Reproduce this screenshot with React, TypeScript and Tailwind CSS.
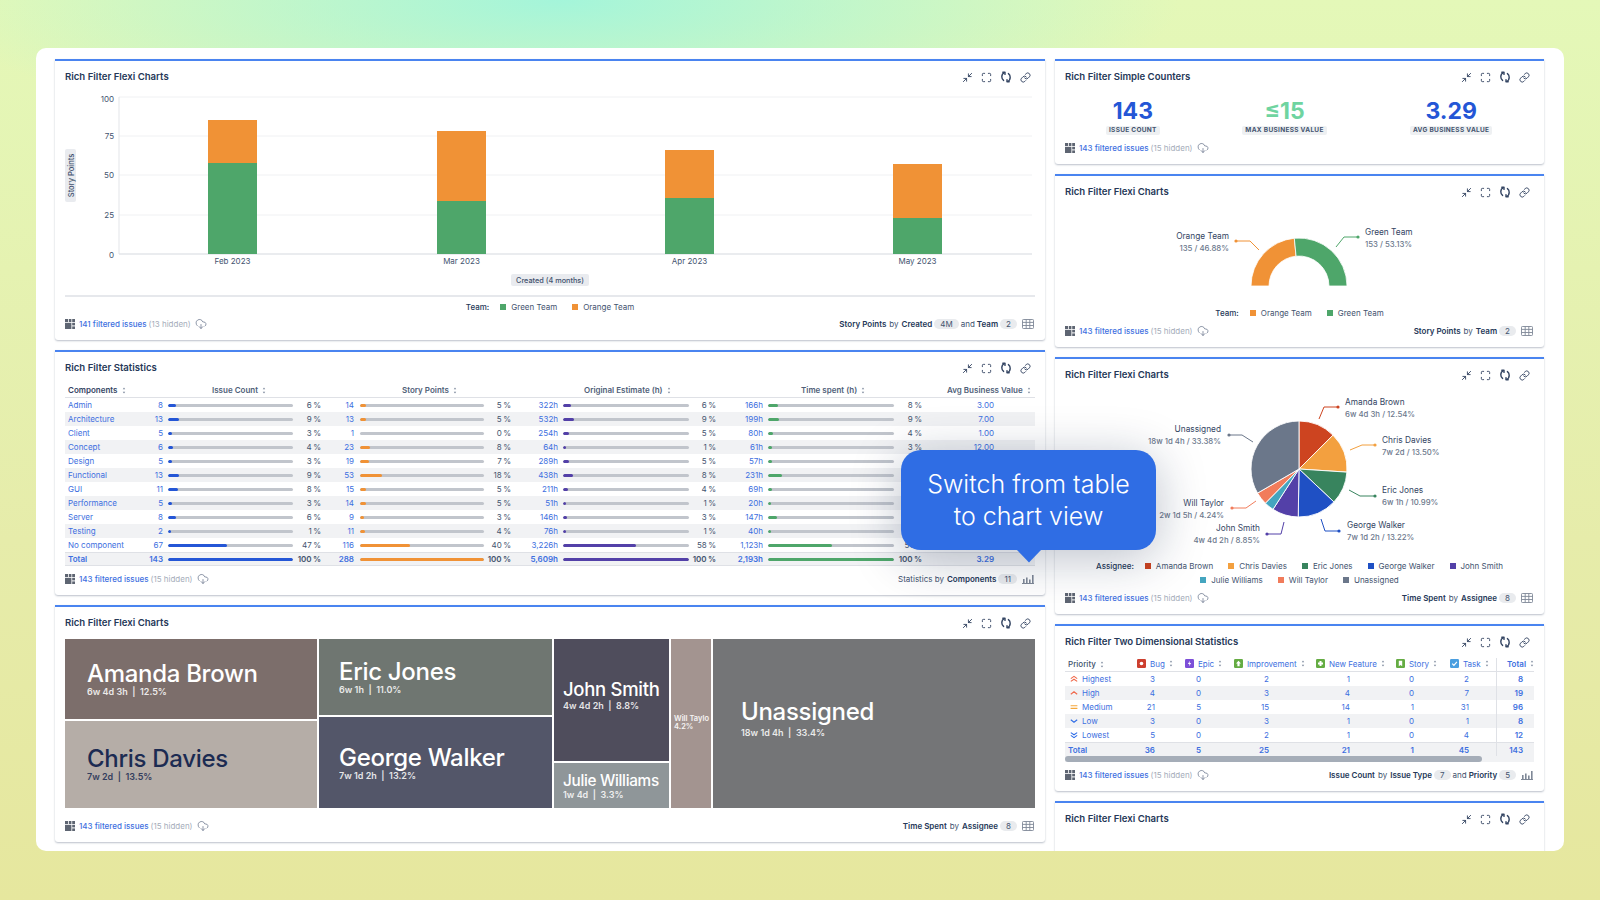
import React from "react";
import { Minimize2, Maximize, Link, CloudDownload } from "lucide-react";

const BLUE = "#2456d6", ORANGE = "#f09236", PURPLE = "#5340a8", GREEN = "#4ea66a";

function Refresh() {
  return (
    <svg width="12" height="12" viewBox="0 0 12 12" fill="none" stroke="#344563" strokeWidth="1.4" strokeLinecap="round" strokeLinejoin="round">
      <path d="M4.5 1.6C2.8 2.2 1.8 3.9 1.8 5.8c0 1.5.7 2.8 1.8 3.6" />
      <path d="M2.8 1.2h2.2v2.2" />
      <path d="M7.5 10.4c1.7-.6 2.7-2.3 2.7-4.2 0-1.5-.7-2.8-1.8-3.6" />
      <path d="M9.2 10.8H7V8.6" />
    </svg>
  );
}

function HeaderIcons() {
  return (
    <div className="flex items-center gap-[8px] text-[#344563]">
      <Minimize2 size={11} strokeWidth={2} />
      <Maximize size={11} strokeWidth={2} />
      <Refresh />
      <Link size={11} strokeWidth={2} />
    </div>
  );
}

function FilterIcon() {
  return (
    <svg width="10" height="10" viewBox="0 0 10 10" fill="#5e6572">
      <rect x="0" y="0" width="3" height="3" />
      <rect x="3.8" y="0" width="2.6" height="3" />
      <rect x="7.2" y="0" width="2.8" height="3" />
      <rect x="0" y="3.8" width="6.4" height="6.2" />
      <rect x="7.2" y="3.8" width="2.8" height="2.6" />
      <rect x="7.2" y="7.4" width="2.8" height="2.6" />
    </svg>
  );
}

function TableIcon() {
  return (
    <svg width="12" height="10" viewBox="0 0 12 10" fill="none" stroke="#7f8897" strokeWidth="0.9">
      <rect x="0.5" y="0.5" width="11" height="9" rx="0.8" />
      <path d="M0.5 3.4h11M0.5 6.5h11M4.2 0.5v9M7.8 0.5v9" />
    </svg>
  );
}

function ChartIcon() {
  return (
    <svg width="12" height="10" viewBox="0 0 12 10" fill="#7f8897">
      <rect x="0" y="9" width="12" height="1" />
      <rect x="1" y="5" width="1.6" height="4" />
      <rect x="4" y="3.5" width="1.6" height="5.5" />
      <rect x="7" y="5.5" width="1.6" height="3.5" />
      <rect x="10" y="1" width="1.6" height="8" />
    </svg>
  );
}

function Chip({ children }: { children: React.ReactNode }) {
  return <span className="mx-[2px] inline-flex h-[10px] min-w-[16px] items-center justify-center rounded-full bg-[#e9ebee] px-[6px] text-[8px] font-normal leading-none text-[#44546f]">{children}</span>;
}

function Footer({ shown, hidden, right, icon }: { shown: number; hidden: number; right?: React.ReactNode; icon?: "table" | "chart" }) {
  return (
    <div className="mt-auto mb-[9px] flex h-[14px] items-center justify-between text-[8px] leading-none">
      <div className="flex items-center">
        <FilterIcon />
        <span className="ml-[4px] font-medium text-[#3d6fe0]">{shown} filtered issues</span>
        <span className="ml-[2px] text-[#a5adba]">({hidden} hidden)</span>
        <CloudDownload size={12} strokeWidth={1.4} className="ml-[4px] text-[#5e6c84]" />
      </div>
      {right && (
        <div className="mr-[1px] flex items-center text-[#42526e]">
          {right}
          <span className="ml-[3px] flex">{icon === "chart" ? <ChartIcon /> : <TableIcon />}</span>
        </div>
      )}
    </div>
  );
}

function B({ children }: { children: React.ReactNode }) {
  return <b className="font-semibold text-[#253858]">{children}</b>;
}

function Panel({ title, className, children }: { title: string; className: string; children?: React.ReactNode }) {
  return (
    <section className={`flex shrink-0 flex-col rounded-b-[3px] border-t-2 border-[#4a84f0] bg-white px-[10px] shadow-[0_1px_2px_rgba(9,30,66,0.28)] ${className}`}>
      <div className="flex h-[32px] shrink-0 items-center justify-between pr-[4px]">
        <h2 className="text-[9.6px] font-semibold text-[#253858]">{title}</h2>
        <HeaderIcons />
      </div>
      {children}
    </section>
  );
}

function Legend({ label, items }: { label?: string; items: [string, string][] }) {
  return (
    <div className="flex h-[14px] items-center justify-center gap-[15px] text-[8px] text-[#44546f]">
      {label && <span className="mr-[-4px] font-medium text-[#253858]">{label}</span>}
      {items.map(([n, c]) => (
        <span key={n} className="flex items-center gap-[5px]">
          <i className="block h-[6px] w-[6px]" style={{ background: c }} />
          {n}
        </span>
      ))}
    </div>
  );
}

function BarChart() {
  const ticks: [string, number, number][] = [["100", 97, 5], ["75", 136, 3], ["50", 175, 3], ["25", 215, 3], ["0", 254, 4]];
  const bars: [number, number, number, string][] = [
    [208, 120, 163, "Feb 2023"],
    [437, 131, 201, "Mar 2023"],
    [665, 150, 198, "Apr 2023"],
    [893, 164, 218, "May 2023"],
  ];
  return (
    <svg width="970" height="198" viewBox="65 93 970 198" className="shrink-0">
      {ticks.map(([t, y, o]) => (
        <g key={t}>
          <line x1="119" x2="1032" y1={y} y2={y} stroke={t === "0" ? "#d5d9df" : "#f0f1f3"} strokeWidth="1" />
          <text x="114" y={y + o} fontSize="8" textAnchor="end" fill="#44546f">{t}</text>
        </g>
      ))}
      <line x1="119" x2="119" y1="97" y2="254" stroke="#e3e5e9" />
      {bars.map(([x, top, split, label]) => (
        <g key={label}>
          <rect x={x} y={top} width="49" height={split - top} fill={ORANGE} />
          <rect x={x} y={split} width="49" height={254 - split} fill={GREEN} />
          <text x={x + 24.5} y="264" fontSize="8" textAnchor="middle" fill="#44546f">{label}</text>
        </g>
      ))}
      <rect x="65" y="149" width="11" height="53" rx="2" fill="#e9ebef" />
      <text transform="translate(73.5 175.5) rotate(-90)" fontSize="7.5" fontWeight="500" textAnchor="middle" fill="#42526e">Story Points</text>
      <rect x="511" y="274" width="78" height="12" rx="2" fill="#e9ebef" />
      <text x="550" y="283" fontSize="7.3" fontWeight="500" textAnchor="middle" fill="#42526e">Created (4 months)</text>
    </svg>
  );
}

type Row = [string, string, number, string, number, string, number, string, number, string];
const rows: Row[] = [
  ["Admin", "8", 6, "14", 5, "322h", 6, "166h", 8, "3.00"],
  ["Architecture", "13", 9, "13", 5, "532h", 9, "199h", 9, "7.00"],
  ["Client", "5", 3, "1", 0, "254h", 5, "80h", 4, "1.00"],
  ["Concept", "6", 4, "23", 8, "64h", 1, "61h", 3, "12.00"],
  ["Design", "5", 3, "19", 7, "289h", 5, "57h", 3, ""],
  ["Functional", "13", 9, "53", 18, "438h", 8, "231h", 11, ""],
  ["GUI", "11", 8, "15", 5, "211h", 4, "69h", 3, ""],
  ["Performance", "5", 3, "14", 5, "51h", 1, "20h", 1, ""],
  ["Server", "8", 6, "9", 3, "146h", 3, "147h", 7, ""],
  ["Testing", "2", 1, "11", 4, "76h", 1, "40h", 2, ""],
  ["No component", "67", 47, "116", 40, "3,226h", 58, "1,123h", 51, ""],
  ["Total", "143", 100, "288", 100, "5,609h", 100, "2,193h", 100, "3.29"],
];

function Bar({ pct, color, className }: { pct: number; color: string; className: string }) {
  return (
    <span className={`block h-[3px] overflow-hidden rounded-full bg-[#c1c5cc] ${className}`}>
      {pct > 0 && <span className="block h-full rounded-full" style={{ width: `${Math.max(pct, 2)}%`, background: color }} />}
    </span>
  );
}

function Sort() {
  return (
    <svg width="4" height="7" viewBox="0 0 4 7" fill="#7a869a" className="ml-[4px] inline-block">
      <path d="M2 0.5 3.2 2.3H.8zM2 6.5.8 4.7h2.4z" />
    </svg>
  );
}

function Pct({ v, w }: { v: number; w: string }) {
  return <span className={`block text-right text-[#44546f] ${w}`}>{v}{"\u2009"}%</span>;
}

function StatsTable() {
  return (
    <div className="mt-[1px] flex flex-col text-[8px]">
      <div className="flex h-[13px] items-center whitespace-nowrap border-b border-[#dfe1e6] pb-[3px] font-semibold text-[#505f79]">
        <span className="w-[147px] pl-[3px] text-[#344563]">Components<Sort /></span>
        <span className="w-[190px]">Issue Count<Sort /></span>
        <span className="w-[182px]">Story Points<Sort /></span>
        <span className="w-[217px]">Original Estimate (h)<Sort /></span>
        <span className="w-[146px]">Time spent (h)<Sort /></span>
        <span>Avg Business Value<Sort /></span>
      </div>
      {rows.map((r, i) => {
        const total = r[0] === "Total";
        return (
          <div key={r[0]} className={`flex h-[14px] items-center ${i % 2 ? "bg-[#f1f2f4]" : ""} ${total ? "border-y border-[#dfe1e6] font-semibold" : ""} text-[#3d6fe0]`}>
            <span className="w-[70px] pl-[3px] whitespace-nowrap">{r[0]}</span>
            <span className="w-[28px] text-right">{r[1]}</span>
            <Bar pct={r[2]} color={BLUE} className="ml-[5px] w-[125px]" />
            <Pct v={r[2]} w="w-[28px]" />
            <span className="w-[33px] text-right">{r[3]}</span>
            <Bar pct={r[4]} color={ORANGE} className="ml-[6px] w-[124px]" />
            <Pct v={r[4]} w="w-[27px]" />
            <span className="w-[47px] text-right">{r[5]}</span>
            <Bar pct={r[6]} color={PURPLE} className="ml-[5px] w-[126px]" />
            <Pct v={r[6]} w="w-[27px]" />
            <span className="w-[47px] text-right">{r[7]}</span>
            <Bar pct={r[8]} color={GREEN} className="ml-[5px] w-[126px]" />
            <Pct v={r[8]} w="w-[28px]" />
            <span className="w-[72px] text-right">{r[9]}</span>
          </div>
        );
      })}
    </div>
  );
}

function Cell({ name, sub, bg, cls, title, dark, pad }: { name: string; sub: string; bg: string; cls: string; title: string; dark?: boolean; pad: string }) {
  return (
    <div className={`overflow-hidden ${bg} ${cls} ${pad} ${dark ? "text-[#1c2b52]" : "text-white"}`}>
      <div className={`whitespace-nowrap font-medium tracking-[-0.3px] ${title}`}>{name}</div>
      <div className="whitespace-pre text-[9px] font-semibold leading-[12px] opacity-85">{sub}</div>
    </div>
  );
}

function Treemap() {
  return (
    <div className="flex h-[169px] shrink-0 gap-[2px]">
      <div className="flex w-[252px] flex-col gap-[2px]">
        <Cell name="Amanda Brown" sub="6w 4d 3h  |  12.5%" bg="bg-[#7c6e6b]" cls="h-[80px]" pad="pl-[22px] pt-[23px]" title="text-[24px] leading-[24px]" />
        <Cell name="Chris Davies" sub="7w 2d  |  13.5%" bg="bg-[#b5ada7]" cls="flex-1" pad="pl-[22px] pt-[26px]" title="text-[24px] leading-[24px]" dark />
      </div>
      <div className="flex w-[233px] flex-col gap-[2px]">
        <Cell name="Eric Jones" sub="6w 1h  |  11.0%" bg="bg-[#6f7671]" cls="h-[76px]" pad="pl-[20px] pt-[21px]" title="text-[24px] leading-[24px]" />
        <Cell name="George Walker" sub="7w 1d 2h  |  13.2%" bg="bg-[#535669]" cls="flex-1" pad="pl-[20px] pt-[29px]" title="text-[24px] leading-[24px]" />
      </div>
      <div className="flex w-[115px] flex-col gap-[2px]">
        <Cell name="John Smith" sub="4w 4d 2h  |  8.8%" bg="bg-[#4f4d5c]" cls="h-[122px]" pad="pl-[9px] pt-[39px]" title="text-[18.5px] leading-[22px]" />
        <Cell name="Julie Williams" sub="1w 4d  |  3.3%" bg="bg-[#8f9699]" cls="flex-1" pad="pl-[9px] pt-[9px]" title="text-[15.3px] leading-[17px]" />
      </div>
      <div className="w-[40px] overflow-hidden whitespace-nowrap bg-[#a39490] pl-[3px] pt-[76px] text-[7.5px] font-semibold leading-[8px] text-white/90">
        <div>Will Taylo</div>
        <div>4.2%</div>
      </div>
      <Cell name="Unassigned" sub="18w 1d 4h  |  33.4%" bg="bg-[#747577]" cls="flex-1" pad="pl-[28px] pt-[58px]" title="text-[24px] leading-[30px]" />
    </div>
  );
}

function Counter({ v, label, color, w }: { v: string; label: string; color: string; w: string }) {
  return (
    <div className={`flex flex-col items-center ${w}`}>
      <div className="text-[23px] font-bold leading-[26px]" style={{ color }}>{v}</div>
      <div className="mt-[2px] rounded-[2px] bg-[#eef0f2] px-[3px] text-[6.5px] font-bold leading-[9px] tracking-[0.3px] text-[#44546f]">{label}</div>
    </div>
  );
}

function Callout({ x, y, name, sub, end, color, pts }: { x: number; y: number; name: string; sub: string; end?: boolean; color: string; pts: number[][] }) {
  return (
    <g>
      <text x={x} y={y + 3} fontSize="8.3" fill="#344563" textAnchor={end ? "end" : "start"}>{name}</text>
      <text x={x} y={y + 14.5} fontSize="7.8" fill="#6b778c" textAnchor={end ? "end" : "start"} fontWeight="500">{sub}</text>
      <polyline points={pts.map((p) => p.join(",")).join(" ")} fill="none" stroke={color} strokeWidth="1" />
      <circle cx={pts[0][0]} cy={pts[0][1]} r="1.6" fill={color} />
    </g>
  );
}

function polar(cx: number, cy: number, r: number, deg: number) {
  const a = (deg * Math.PI) / 180;
  return [cx + r * Math.cos(a), cy - r * Math.sin(a)];
}

function Donut() {
  const cx = 1299, cy = 286, R = 48, r = 30, split = 95.6;
  const seg = (a0: number, a1: number) => {
    const [x0, y0] = polar(cx, cy, R, a0), [x1, y1] = polar(cx, cy, R, a1);
    const [x2, y2] = polar(cx, cy, r, a1), [x3, y3] = polar(cx, cy, r, a0);
    return `M${x0} ${y0}A${R} ${R} 0 0 1 ${x1} ${y1}L${x2} ${y2}A${r} ${r} 0 0 0 ${x3} ${y3}Z`;
  };
  return (
    <svg width="470" height="98" viewBox="1065 208 470 98" className="shrink-0">
      <path d={seg(180, split)} fill={ORANGE} stroke="#fff" strokeWidth="0.8" />
      <path d={seg(split, 0)} fill={GREEN} stroke="#fff" strokeWidth="0.8" />
      <Callout x={1229} y={236} name="Orange Team" sub="135 / 46.88%" end color={ORANGE} pts={[[1236, 241], [1250, 241], [1259, 250]]} />
      <Callout x={1365} y={232} name="Green Team" sub="153 / 53.13%" color={GREEN} pts={[[1358, 237], [1344, 237], [1336, 247]]} />
    </svg>
  );
}

const people: [string, string][] = [
  ["Amanda Brown", "#cd4420"],
  ["Chris Davies", "#f3a03f"],
  ["Eric Jones", "#38845e"],
  ["George Walker", "#1f50c4"],
  ["John Smith", "#5340a8"],
  ["Julie Williams", "#44a5bf"],
  ["Will Taylor", "#f17c5b"],
  ["Unassigned", "#6b778a"],
];

function Pie() {
  const cx = 1299, cy = 469, R = 48;
  const vals = [12.54, 13.5, 10.99, 13.22, 8.85, 3.28, 4.24, 33.38];
  let acc = 0;
  const paths = vals.map((v, i) => {
    const a0 = 90 - (acc / 100) * 360;
    acc += v;
    const a1 = 90 - (acc / 100) * 360;
    const [x0, y0] = polar(cx, cy, R, a0), [x1, y1] = polar(cx, cy, R, a1);
    return <path key={i} d={`M${cx} ${cy}L${x0} ${y0}A${R} ${R} 0 ${v > 50 ? 1 : 0} 1 ${x1} ${y1}Z`} fill={people[i][1]} stroke="#fff" strokeWidth="0.9" />;
  });
  return (
    <svg width="470" height="165" viewBox="1065 391 470 165" className="shrink-0">
      {paths}
      <Callout x={1345} y={402} name="Amanda Brown" sub="6w 4d 3h / 12.54%" color="#cd4420" pts={[[1338, 407], [1324, 407], [1319, 419]]} />
      <Callout x={1382} y={440} name="Chris Davies" sub="7w 2d / 13.50%" color="#f3a03f" pts={[[1375, 445], [1362, 445], [1350, 450]]} />
      <Callout x={1382} y={490} name="Eric Jones" sub="6w 1h / 10.99%" color="#38845e" pts={[[1375, 496], [1360, 496], [1349, 490]]} />
      <Callout x={1347} y={525} name="George Walker" sub="7w 1d 2h / 13.22%" color="#1f50c4" pts={[[1339, 531], [1325, 531], [1321, 519]]} />
      <Callout x={1260} y={528} name="John Smith" sub="4w 4d 2h / 8.85%" end color="#5340a8" pts={[[1267, 534], [1281, 534], [1284, 522]]} />
      <Callout x={1224} y={503} name="Will Taylor" sub="2w 1d 5h / 4.24%" end color="#f17c5b" pts={[[1232, 508], [1246, 508], [1256, 501]]} />
      <Callout x={1221} y={429} name="Unassigned" sub="18w 1d 4h / 33.38%" end color="#6b778a" pts={[[1229, 435], [1242, 435], [1253, 442]]} />
    </svg>
  );
}

function TypeIcon({ bg, kind }: { bg: string; kind: string }) {
  return (
    <svg width="9" height="9" viewBox="0 0 9 9" className="mr-[4px] shrink-0">
      <rect width="9" height="9" rx="1.2" fill={bg} />
      {kind === "bug" && <circle cx="4.5" cy="4.5" r="1.8" fill="#fff" />}
      {kind === "epic" && <path d="M5 1.8 2.8 4.9h1.6L4 7.2l2.2-3.1H4.6z" fill="#fff" />}
      {kind === "up" && <path d="M4.5 1.8 7 4.4H5.6v2.8H3.4V4.4H2z" fill="#fff" />}
      {kind === "plus" && <path d="M3.5 2h2v1.5H7v2H5.5V7h-2V5.5H2v-2h1.5z" fill="#fff" />}
      {kind === "story" && <path d="M2.8 1.8h3.4v5.4L4.5 5.9 2.8 7.2z" fill="#fff" />}
      {kind === "task" && <path d="M2.2 4.6 3.9 6.3 6.9 2.9" fill="none" stroke="#fff" strokeWidth="1.2" />}
    </svg>
  );
}

function PriorityIcon({ kind }: { kind: string }) {
  const red = "#f0684a", blue = "#2f6de6";
  return (
    <svg width="8" height="8" viewBox="0 0 8 8" fill="none" strokeWidth="1.1" className="mr-[4px] shrink-0">
      {kind === "Highest" && <path d="M.8 3.6 4 1.4l3.2 2.2M.8 6.4 4 4.2l3.2 2.2" stroke={red} />}
      {kind === "High" && <path d="M.8 5.2 4 2.8l3.2 2.4" stroke={red} />}
      {kind === "Medium" && <path d="M.6 2.8h6.8M.6 5.4h6.8" stroke="#f5a83c" />}
      {kind === "Low" && <path d="M.8 2.8 4 5.2l3.2-2.4" stroke={blue} />}
      {kind === "Lowest" && <path d="M.8 1.6 4 3.8l3.2-2.2M.8 4.4 4 6.6l3.2-2.2" stroke={blue} />}
    </svg>
  );
}

const twoD: [string, string, string, string, string, string, string, string][] = [
  ["Highest", "3", "0", "2", "1", "0", "2", "8"],
  ["High", "4", "0", "3", "4", "0", "7", "19"],
  ["Medium", "21", "5", "15", "14", "1", "31", "96"],
  ["Low", "3", "0", "3", "1", "0", "1", "8"],
  ["Lowest", "5", "0", "2", "1", "0", "4", "12"],
  ["Total", "36", "5", "25", "21", "1", "45", "143"],
];

function TwoDTable() {
  const heads: [string, string, string, string][] = [
    ["Bug", "#cd3f2f", "bug", "w-[48px]"],
    ["Epic", "#7d4fd8", "epic", "w-[49px]"],
    ["Improvement", "#65ac43", "up", "w-[82px]"],
    ["New Feature", "#65ac43", "plus", "w-[80px]"],
    ["Story", "#65ac43", "story", "w-[54px]"],
    ["Task", "#4b9fe0", "task", "w-[57px]"],
  ];
  return (
    <div className="relative flex flex-col text-[8px] text-[#3d6fe0]">
      <div className="flex h-[14px] items-center whitespace-nowrap border-b border-[#dfe1e6] pb-[2px]">
        <span className="w-[72px] pl-[3px] font-medium text-[#42526e]">Priority<Sort /></span>
        {heads.map(([n, c, k, w]) => (
          <span key={n} className={`flex items-center ${w}`}>
            <TypeIcon bg={c} kind={k} />
            {n}
            <Sort />
          </span>
        ))}
        <span className="flex items-center font-semibold">Total<Sort /></span>
      </div>
      {twoD.map((r, i) => {
        const total = r[0] === "Total";
        return (
          <div key={r[0]} className={`flex h-[14px] items-center ${i % 2 ? "bg-[#f1f2f4]" : ""} ${total ? "border-t border-[#dfe1e6] font-semibold" : ""}`}>
            <span className="flex w-[66px] items-center pl-[5px]">
              {total ? <span className="ml-[-2px]">Total</span> : <><PriorityIcon kind={r[0]} />{r[0]}</>}
            </span>
            <span className="w-[24px] text-right">{r[1]}</span>
            <span className="w-[46px] text-right">{r[2]}</span>
            <span className="w-[68px] text-right">{r[3]}</span>
            <span className="w-[81px] text-right">{r[4]}</span>
            <span className="w-[64px] text-right">{r[5]}</span>
            <span className="w-[55px] text-right">{r[6]}</span>
            <span className="w-[54px] text-right font-semibold">{r[7]}</span>
          </div>
        );
      })}
      <div className="h-[6px] bg-[#f1f2f4]">
        <div className="h-full w-[417px] rounded-full bg-[#a5adb8]" />
      </div>
      <div className="absolute bottom-[6px] left-[431px] top-0 w-px bg-[#dfe1e6]" />
    </div>
  );
}

export default function App() {
  return (
    <div className="relative h-[900px] w-[1600px] overflow-hidden bg-[radial-gradient(ellipse_620px_150px_at_560px_0px,#a4f5da_0%,rgba(164,245,218,0)_100%),linear-gradient(180deg,#e4f8b8_0%,#e6ecaa_60%,#e6e79e_100%)] px-[36px] pt-[48px] font-[Inter,sans-serif]">
      <main className="flex h-[803px] gap-[10px] overflow-hidden rounded-[10px] bg-white pl-[19px] pr-[20px] pt-[11px]">
        <div className="flex w-[990px] flex-col gap-[10px]">
          <Panel title="Rich Filter Flexi Charts" className="h-[281px]">
            <BarChart />
            <div className="mt-[4px] h-[2px] shrink-0 bg-[#e6e8ec]" />
            <div className="mt-[3px]">
              <Legend label="Team:" items={[["Green Team", GREEN], ["Orange Team", ORANGE]]} />
            </div>
            <Footer shown={141} hidden={13} icon="table" right={<><B>Story Points</B><span className="mx-[3px]">by</span><B>Created</B><Chip>4M</Chip><span className="mr-[2px]">and</span><B>Team</B><Chip>2</Chip></>} />
          </Panel>
          <Panel title="Rich Filter Statistics" className="h-[245px]">
            <StatsTable />
            <Footer shown={143} hidden={15} icon="chart" right={<><span className="mr-[3px]">Statistics by</span><B>Components</B><Chip>11</Chip></>} />
          </Panel>
          <Panel title="Rich Filter Flexi Charts" className="h-[237px]">
            <Treemap />
            <Footer shown={143} hidden={15} icon="table" right={<><B>Time Spent</B><span className="mx-[3px]">by</span><B>Assignee</B><Chip>8</Chip></>} />
          </Panel>
        </div>
        <div className="flex w-[489px] flex-col gap-[10px]">
          <Panel title="Rich Filter Simple Counters" className="h-[105px]">
            <div className="mt-[5px] flex">
              <Counter v="143" label="ISSUE COUNT" color={BLUE} w="w-[136px]" />
              <Counter v="≤15" label="MAX BUSINESS VALUE" color="#6fd4a0" w="w-[168px]" />
              <Counter v="3.29" label="AVG BUSINESS VALUE" color={BLUE} w="w-[166px]" />
            </div>
            <Footer shown={143} hidden={15} />
          </Panel>
          <Panel title="Rich Filter Flexi Charts" className="h-[173px]">
            <Donut />
            <div>
              <Legend label="Team:" items={[["Orange Team", ORANGE], ["Green Team", GREEN]]} />
            </div>
            <Footer shown={143} hidden={15} icon="table" right={<><B>Story Points</B><span className="mx-[3px]">by</span><B>Team</B><Chip>2</Chip></>} />
          </Panel>
          <Panel title="Rich Filter Flexi Charts" className="h-[257px]">
            <Pie />
            <div className="mt-[3px]">
              <Legend label="Assignee:" items={people.slice(0, 5)} />
              <Legend items={people.slice(5)} />
            </div>
            <Footer shown={143} hidden={15} icon="table" right={<><B>Time Spent</B><span className="mx-[3px]">by</span><B>Assignee</B><Chip>8</Chip></>} />
          </Panel>
          <Panel title="Rich Filter Two Dimensional Statistics" className="h-[167px]">
            <TwoDTable />
            <Footer shown={143} hidden={15} icon="chart" right={<><B>Issue Count</B><span className="mx-[3px]">by</span><B>Issue Type</B><Chip>7</Chip><span className="mr-[2px]">and</span><B>Priority</B><Chip>5</Chip></>} />
          </Panel>
          <Panel title="Rich Filter Flexi Charts" className="h-[100px]" />
        </div>
      </main>
      <div className="absolute left-[901px] top-[450px] flex h-[100px] w-[255px] items-center justify-center rounded-[20px] bg-[#2f6de4] text-center text-[25px] font-light leading-[32px] text-white shadow-[0_8px_50px_rgba(9,30,66,0.28)]">
        Switch from table
        <br />
        to chart view
        <svg width="24" height="13" viewBox="0 0 24 13" className="absolute left-[116px] top-[100px]">
          <path d="M0 0h24L12 12.5z" fill="#2f6de4" />
        </svg>
      </div>
    </div>
  );
}
